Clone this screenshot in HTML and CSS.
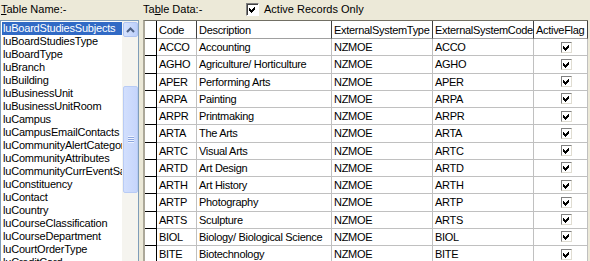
FILE: index.html
```html
<!DOCTYPE html>
<html>
<head>
  <link rel="stylesheet" href="styles.css">
</head>
<body>
  <div class="form">
    <div class="pane-left">
      <div class="caption"><u>T</u>able Name:-</div>
      <div class="listbox">
        <div class="items">
          <div class="item selected">luBoardStudiesSubjects</div>
          <div class="item">luBoardStudiesType</div>
          <div class="item">luBoardType</div>
          <div class="item">luBranch</div>
          <div class="item">luBuilding</div>
          <div class="item">luBusinessUnit</div>
          <div class="item">luBusinessUnitRoom</div>
          <div class="item">luCampus</div>
          <div class="item">luCampusEmailContacts</div>
          <div class="item">luCommunityAlertCategory</div>
          <div class="item">luCommunityAttributes</div>
          <div class="item">luCommunityCurrEventSa</div>
          <div class="item">luConstituency</div>
          <div class="item">luContact</div>
          <div class="item">luCountry</div>
          <div class="item">luCourseClassification</div>
          <div class="item">luCourseDepartment</div>
          <div class="item">luCourtOrderType</div>
          <div class="item">luCreditCard</div>
        </div>
        <div class="scrollbar">
          <div class="sb-btn">
            <svg width="9" height="6" viewBox="0 0 9 6"><polyline points="1,5 4.5,1.5 8,5" fill="none" stroke="#4d6185" stroke-width="2"/></svg>
          </div>
          <div class="sb-track">
            <div class="sb-thumb">
              <div class="grip"></div>
            </div>
          </div>
        </div>
      </div>
    </div>

    <div class="pane-right">
      <div class="toolbar">
        <span class="caption">Ta<u>b</u>le Data:-</span>
        <label class="check">
          <span class="box big">
            <svg width="7" height="7" viewBox="0 0 7 7" shape-rendering="crispEdges"><polygon points="0,2 2,4 6,0 6,3 2,7 0,5" fill="#000"/></svg>
          </span>
          Active Records Only
        </label>
      </div>

      <div class="grid">
        <div class="row head">
          <div class="cell ind"></div>
          <div class="cell">Code</div>
          <div class="cell">Description</div>
          <div class="cell">ExternalSystemType</div>
          <div class="cell">ExternalSystemCode</div>
          <div class="cell">ActiveFlag</div>
        </div>
        <div class="row"><div class="cell ind"></div><div class="cell">ACCO</div><div class="cell">Accounting</div><div class="cell">NZMOE</div><div class="cell">ACCO</div><div class="cell flag"><span class="box"><svg width="7" height="7" viewBox="0 0 7 7" shape-rendering="crispEdges"><polygon points="0,2 2,4 6,0 6,3 2,7 0,5"/></svg></span></div></div>
        <div class="row"><div class="cell ind"></div><div class="cell">AGHO</div><div class="cell">Agriculture/ Horticulture</div><div class="cell">NZMOE</div><div class="cell">AGHO</div><div class="cell flag"><span class="box"><svg width="7" height="7" viewBox="0 0 7 7" shape-rendering="crispEdges"><polygon points="0,2 2,4 6,0 6,3 2,7 0,5"/></svg></span></div></div>
        <div class="row"><div class="cell ind"></div><div class="cell">APER</div><div class="cell">Performing Arts</div><div class="cell">NZMOE</div><div class="cell">APER</div><div class="cell flag"><span class="box"><svg width="7" height="7" viewBox="0 0 7 7" shape-rendering="crispEdges"><polygon points="0,2 2,4 6,0 6,3 2,7 0,5"/></svg></span></div></div>
        <div class="row"><div class="cell ind"></div><div class="cell">ARPA</div><div class="cell">Painting</div><div class="cell">NZMOE</div><div class="cell">ARPA</div><div class="cell flag"><span class="box"><svg width="7" height="7" viewBox="0 0 7 7" shape-rendering="crispEdges"><polygon points="0,2 2,4 6,0 6,3 2,7 0,5"/></svg></span></div></div>
        <div class="row"><div class="cell ind"></div><div class="cell">ARPR</div><div class="cell">Printmaking</div><div class="cell">NZMOE</div><div class="cell">ARPR</div><div class="cell flag"><span class="box"><svg width="7" height="7" viewBox="0 0 7 7" shape-rendering="crispEdges"><polygon points="0,2 2,4 6,0 6,3 2,7 0,5"/></svg></span></div></div>
        <div class="row"><div class="cell ind"></div><div class="cell">ARTA</div><div class="cell">The Arts</div><div class="cell">NZMOE</div><div class="cell">ARTA</div><div class="cell flag"><span class="box"><svg width="7" height="7" viewBox="0 0 7 7" shape-rendering="crispEdges"><polygon points="0,2 2,4 6,0 6,3 2,7 0,5"/></svg></span></div></div>
        <div class="row"><div class="cell ind"></div><div class="cell">ARTC</div><div class="cell">Visual Arts</div><div class="cell">NZMOE</div><div class="cell">ARTC</div><div class="cell flag"><span class="box"><svg width="7" height="7" viewBox="0 0 7 7" shape-rendering="crispEdges"><polygon points="0,2 2,4 6,0 6,3 2,7 0,5"/></svg></span></div></div>
        <div class="row"><div class="cell ind"></div><div class="cell">ARTD</div><div class="cell">Art Design</div><div class="cell">NZMOE</div><div class="cell">ARTD</div><div class="cell flag"><span class="box"><svg width="7" height="7" viewBox="0 0 7 7" shape-rendering="crispEdges"><polygon points="0,2 2,4 6,0 6,3 2,7 0,5"/></svg></span></div></div>
        <div class="row"><div class="cell ind"></div><div class="cell">ARTH</div><div class="cell">Art History</div><div class="cell">NZMOE</div><div class="cell">ARTH</div><div class="cell flag"><span class="box"><svg width="7" height="7" viewBox="0 0 7 7" shape-rendering="crispEdges"><polygon points="0,2 2,4 6,0 6,3 2,7 0,5"/></svg></span></div></div>
        <div class="row"><div class="cell ind"></div><div class="cell">ARTP</div><div class="cell">Photography</div><div class="cell">NZMOE</div><div class="cell">ARTP</div><div class="cell flag"><span class="box"><svg width="7" height="7" viewBox="0 0 7 7" shape-rendering="crispEdges"><polygon points="0,2 2,4 6,0 6,3 2,7 0,5"/></svg></span></div></div>
        <div class="row"><div class="cell ind"></div><div class="cell">ARTS</div><div class="cell">Sculpture</div><div class="cell">NZMOE</div><div class="cell">ARTS</div><div class="cell flag"><span class="box"><svg width="7" height="7" viewBox="0 0 7 7" shape-rendering="crispEdges"><polygon points="0,2 2,4 6,0 6,3 2,7 0,5"/></svg></span></div></div>
        <div class="row"><div class="cell ind"></div><div class="cell">BIOL</div><div class="cell">Biology/ Biological Science</div><div class="cell">NZMOE</div><div class="cell">BIOL</div><div class="cell flag"><span class="box"><svg width="7" height="7" viewBox="0 0 7 7" shape-rendering="crispEdges"><polygon points="0,2 2,4 6,0 6,3 2,7 0,5"/></svg></span></div></div>
        <div class="row"><div class="cell ind"></div><div class="cell">BITE</div><div class="cell">Biotechnology</div><div class="cell">NZMOE</div><div class="cell">BITE</div><div class="cell flag"><span class="box"><svg width="7" height="7" viewBox="0 0 7 7" shape-rendering="crispEdges"><polygon points="0,2 2,4 6,0 6,3 2,7 0,5"/></svg></span></div></div>
        <div class="row"><div class="cell ind"></div><div class="cell"></div><div class="cell"></div><div class="cell"></div><div class="cell"></div><div class="cell"></div></div>
      </div>
    </div>
  </div>
</body>
</html>
```

FILE: styles.css
```css
html, body {
  margin: 0;
  height: 261px;
  overflow: hidden;
}

body {
  background: #ece9d8;
  font-family: "Liberation Sans", Arial, sans-serif;
  font-size: 11px;
  color: #000;
}

.form {
  display: grid;
  grid-template-columns: 139px 1fr;
  column-gap: 4px;
}

.caption {
  height: 20px;
  line-height: 18px;
  padding-left: 1px;
  white-space: nowrap;
}

/* left list */
.listbox {
  display: flex;
  height: 250px;
  background: #fff;
  border: 1px solid #7f9db9;
  overflow: hidden;
}

.items {
  width: 121px;
  padding-top: 1px;
  overflow: hidden;
  letter-spacing: -0.2px;
}

.item {
  height: 13px;
  line-height: 13px;
  margin-left: 1px;
  padding-left: 1px;
  white-space: nowrap;
  overflow: hidden;
}

.item.selected {
  background: #316ac5;
  color: #fff;
}

.scrollbar {
  width: 16px;
  display: flex;
  flex-direction: column;
  background: #f5f4ef;
  padding-top: 1px;
}

.sb-btn {
  height: 13px;
  margin: 0 0 0 1px;
  border: 1px solid #b0c4f2;
  border-radius: 2px;
  background: linear-gradient(to right, #d6e2fd, #bccffa);
  display: flex;
  align-items: center;
  justify-content: center;
}

.sb-track {
  flex: 1;
  padding-top: 49px;
}

.sb-thumb {
  height: 105px;
  margin-left: 1px;
  border: 1px solid #b8cbf5;
  border-radius: 2px;
  background: linear-gradient(to right, #d2dffd, #c6d5fb);
  display: flex;
  align-items: center;
  justify-content: center;
}

.grip {
  width: 6px;
  height: 7px;
  background: repeating-linear-gradient(to bottom, #eef3fe 0 1px, #8ca6df 1px 2px);
}

/* right side */
.toolbar {
  display: flex;
  align-items: center;
  height: 20px;
}

.toolbar .caption {
  width: 103px;
  padding-left: 0;
}

.check {
  display: flex;
  align-items: center;
  gap: 5px;
  margin-top: -2px;
}

.box {
  display: inline-flex;
  align-items: center;
  justify-content: center;
  box-sizing: border-box;
  width: 11px;
  height: 11px;
  background: #fff;
  border: 1px solid;
  border-color: #808080 #e0ddd2 #e0ddd2 #808080;
}

.box.big {
  width: 13px;
  height: 13px;
  border-color: #808080 #fff #fff #808080;
  box-shadow: inset 1px 1px 0 #404040;
}

/* data grid */
.grid {
  background: #fff;
  border-top: 1px solid #716f64;
  border-left: 2px solid #aca899;
  width: 443px;
  height: 240px;
  overflow: hidden;
  letter-spacing: -0.3px;
}

.row {
  display: grid;
  grid-template-columns: 12px 40px 135px 101px 101px 54px;
  height: 17.25px;
}

.row.head {
  height: 18px;
}

.cell {
  box-sizing: border-box;
  padding-left: 2px;
  border-right: 1px solid #c0c0c0;
  border-bottom: 1px solid #c0c0c0;
  white-space: nowrap;
  overflow: hidden;
  display: flex;
  align-items: center;
}

.head .cell {
  border-right-color: #404040;
  border-bottom-color: #a0a0a0;
}

.cell.ind,
.head .cell.ind {
  padding: 0;
  border-right: 1px solid #000;
  border-bottom: 1px solid #000;
}

.cell.flag {
  padding-left: 27px;
}
```
